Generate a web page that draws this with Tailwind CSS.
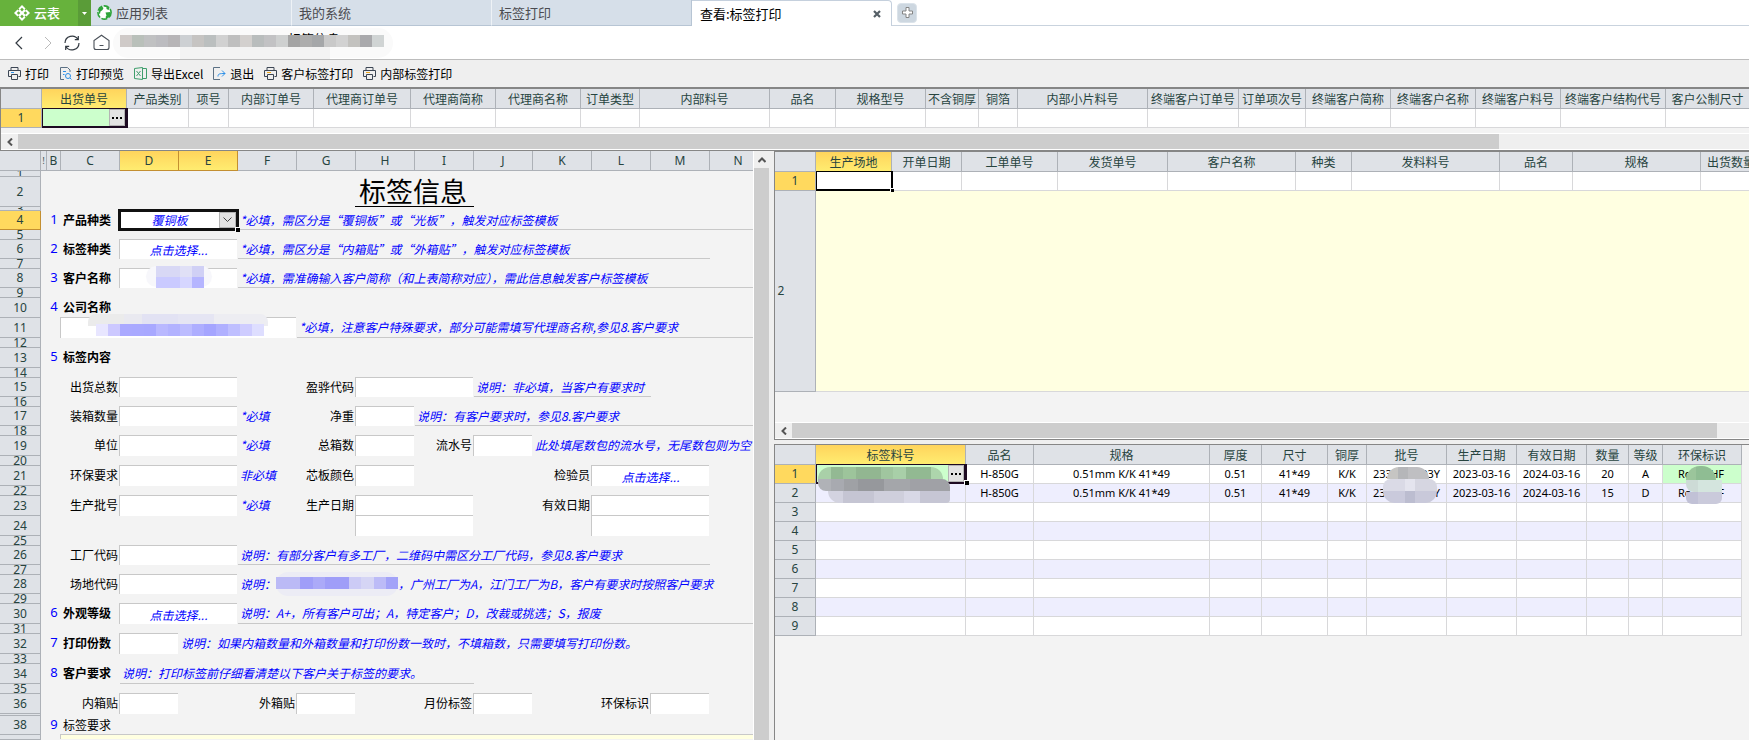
<!DOCTYPE html>
<html lang="zh-CN">
<head>
<meta charset="utf-8">
<title>查看:标签打印</title>
<script src="https://cdn.jsdelivr.net/npm/@tailwindcss/browser@4"></script>
</head>
<body class="flex h-screen flex-col overflow-hidden bg-[#efefef] font-['Noto_Sans_CJK_SC',sans-serif] text-xs leading-4 text-black">

<!-- Tab strip -->
<header class="flex h-[26px] shrink-0 bg-white text-[13px]">
  <div class="flex w-[78px] shrink-0 items-center gap-1 bg-[#67b23c] pl-[14px] text-white">
    <svg class="size-4" viewBox="0 0 16 16"><path d="M8 0l8 8-8 8-8-8z" fill="#fff"/><path d="M8 2.800l1.800 1.800L8 6.400 6.200 4.600zM8 9.600l1.800 1.800L8 13.200l-1.800-1.800zM4.600 6.200L6.400 8 4.600 9.800 2.800 8zM11.400 6.200L13.200 8l-1.800 1.800L9.600 8z" fill="#67b23c"/><path d="M3.500 3.500l1.500 1.500M12.500 3.500L11 5M3.500 12.500L5 11M12.500 12.500L11 11" stroke="#67b23c" stroke-width="1.200"/></svg>
    <span class="font-medium">云表</span>
  </div>
  <button aria-label="菜单" class="flex w-[13px] shrink-0 items-center justify-center bg-[#5a9c38]"><svg class="h-[3px] w-[5px]" viewBox="0 0 5 3"><path d="M0 0h5L2.500 3z" fill="#fff"/></svg></button>
  <nav class="flex">
    <a href="#" class="flex w-[201px] items-center gap-1 border-r border-b border-r-[#eef2f6] border-b-[#b7c5d4] bg-[#d6dfe9] pl-[6px] text-[#4b4b50]">
      <svg class="size-[15px]" viewBox="0 0 15 15"><circle cx="7.500" cy="7.500" r="6.600" fill="#fff" stroke="#2ea43a" stroke-width="1.600" stroke-dasharray="6 1.500"/><path d="M2 3.500L5 1.500l1.500 1.500-1 2-2 1.500L3 9l-1.500-1zM8.500 7.500l5-.500-.500 4-3.500 3-1-2 1-1.500zM9.500 1.500l3 2-1 1.500-2-1z" fill="#2ea43a"/></svg>
      应用列表</a>
    <a href="#" class="flex w-[200px] items-center border-r border-b border-r-[#eef2f6] border-b-[#b7c5d4] bg-[#d6dfe9] pl-[7px] text-[#4b4b50]">我的系统</a>
    <a href="#" class="flex w-[200px] items-center border-r border-b border-[#b7c5d4] bg-[#d6dfe9] pl-[7px] text-[#4b4b50]">标签打印</a>
    <a href="#" aria-current="page" class="flex w-[200px] items-center justify-between rounded-tr border-t border-r border-[#c5d0dd] bg-white pr-[10px] pl-2">查看:标签打印
      <svg class="size-2" viewBox="0 0 8 8"><path d="M1 1l6 6M7 1L1 7" stroke="#555f66" stroke-width="2.200"/></svg></a>
  </nav>
  <div class="flex flex-1 items-center border-b border-[#c9d3de] pl-[5px]">
    <button aria-label="新建标签页" class="flex size-5 items-center justify-center rounded-sm border border-[#dbe3ea] bg-[#cdd7e0]"><svg class="size-[11px]" viewBox="0 0 11 11"><path d="M4 .500h3V4h3.500v3H7v3.500H4V7H.500V4H4z" fill="#fff" stroke="#858585"/></svg></button>
  </div>
</header>

<!-- Address bar -->
<div class="flex h-[34px] shrink-0 items-center border-b border-[#bcbcbc] bg-white pl-[12px]">
  <button aria-label="后退" class="w-[32px]"><svg class="h-4 w-[14px]" viewBox="0 0 14 16" fill="none" stroke="#333a42" stroke-width="1.200"><path d="M10 2L4 8l6 6"/></svg></button>
  <button aria-label="前进" class="w-[20px]" disabled><svg class="h-4 w-2" viewBox="0 0 8 16" fill="none" stroke="#b9b9b9"><path d="M1 2l6 6-6 6"/></svg></button>
  <button aria-label="刷新" class="w-[29px]"><svg class="size-4" viewBox="0 0 16 16" fill="none" stroke="#333a42" stroke-width="1.200"><path d="M1 8A7 7 0 0 1 14 4.500M15 8A7 7 0 0 1 2 11.500M14.300 1v3.700h-3.500M1.700 15v-3.700h3.500"/></svg></button>
  <button aria-label="主页" class="w-[20px]"><svg class="size-[17px]" viewBox="0 0 17 17" fill="none" stroke="#4a5058" stroke-width="1.100"><path d="M3 15.500h11a2 2 0 0 0 2-2V6.500L8.500 1.200l-7.500 5.300v7a2 2 0 0 0 2 2zM6.500 11.500h4"/></svg></button>
  <div class="relative h-[30px] w-[280px] rounded-full bg-[#fafafa]">
    <span class="absolute top-[3px] left-[175px] text-[13px]">标签信息</span>
    <div class="absolute top-[19px] left-[67px] h-3 w-[150px] bg-[#f3f3f3]"></div>
    <div class="absolute top-[7px] left-[7px] flex h-3 w-[264px]">
      <i class="flex-1 bg-[#cfcac8]"></i><i class="flex-1 bg-[#b9c0ba]"></i><i class="flex-1 bg-[#c0c1c2]"></i><i class="flex-1 bg-[#bcbcc0]"></i><i class="flex-1 bg-[#b7b5b7]"></i><i class="flex-1 bg-[#cdd0d3]"></i><i class="flex-1 bg-[#c6c4c2]"></i><i class="flex-1 bg-[#bbbfbf]"></i><i class="flex-1 bg-[#d1d1d1]"></i><i class="flex-1 bg-[#bfbfbf]"></i><i class="flex-1 bg-[#d3d0ce]"></i><i class="flex-1 bg-[#b9bdbd]"></i><i class="flex-1 bg-[#c2c2c4]"></i><i class="flex-1 bg-[#ced0d0]"></i><i class="flex-1 bg-[#a4a4a4]"></i><i class="flex-1 bg-[#adadad]"></i><i class="flex-1 bg-[#a5a7a9]"></i><i class="flex-1 bg-[#c9c9c9]"></i><i class="flex-1 bg-[#d2d2d2]"></i><i class="flex-1 bg-[#c3c2bf]"></i><i class="flex-1 bg-[#a9a9ac]"></i><i class="flex-1 bg-[#d0d4d4]"></i>
    </div>
  </div>
</div>

<!-- Toolbar -->
<div class="flex h-[27px] shrink-0 items-center gap-[10px] pl-2">
  <button class="flex items-center gap-1"><svg class="size-[13px]" viewBox="0 0 13 13" fill="none" stroke="#3c4654"><path d="M3 3.500v-3h7v3M3 9.500H.500v-6h12v6h-2M3.500 7.500h6v5h-6z"/><path d="M3 5.500h3" stroke="#2b8fe8"/></svg>打印</button>
  <button class="flex items-center gap-1"><svg class="size-[13px]" viewBox="0 0 13 13" fill="none" stroke="#5b7084"><path d="M5 12.500H1.500V.500h7L11 3v2"/><path d="M4 4.500h3M4 7.500h1.500M11 11l1.500 1.500" stroke="#2b8fe8"/><circle cx="9" cy="9" r="2.500" stroke="#2b8fe8"/></svg>打印预览</button>
  <button class="flex items-center gap-1"><svg class="size-[13px]" viewBox="0 0 13 13" fill="none" stroke="#3f9e6c"><path d="M.500 1.500l8-1v12l-8-1zM8.500 1.500h4v10h-4M2.500 4l4 5M6.500 4l-4 5"/></svg>导出Excel</button>
  <button class="flex items-center gap-1"><svg class="size-[13px]" viewBox="0 0 13 13" fill="none" stroke="#5b7084"><path d="M7 .500H.500v12H7"/><path d="M5 9.500C5 7 6 6.500 12 6.500M9 3.500l3 3-3 3" stroke="#2b8fe8"/></svg>退出</button>
  <button class="flex items-center gap-1"><svg class="size-[13px]" viewBox="0 0 13 13" fill="none" stroke="#3c4654"><path d="M3 3.500v-3h7v3M3 9.500H.500v-6h12v6h-2M3.500 7.500h6v5h-6z"/><path d="M3 5.500h4" stroke="#f0a81c"/></svg>客户标签打印</button>
  <button class="flex items-center gap-1"><svg class="size-[13px]" viewBox="0 0 13 13" fill="none" stroke="#3c4654"><path d="M3 3.500v-3h7v3M3 9.500H.500v-6h12v6h-2M3.500 7.500h6v5h-6z"/><path d="M3 5.500h4" stroke="#f0a81c"/></svg>内部标签打印</button>
</div>

<!-- Shipment grid -->
<section class="shrink-0 overflow-hidden border-t-2 border-b border-l border-[#868686] bg-[#f3f3f3]">
  <table class="w-[1749px] table-fixed border-separate border-spacing-0 text-center [&_td]:border-r [&_td]:border-b [&_td]:border-[#d8d8da] [&_td]:bg-white [&_td]:p-0 [&_th]:overflow-hidden [&_th]:border-r [&_th]:border-b [&_th]:border-[#adb1b7] [&_th]:p-0 [&_th]:font-normal [&_th]:whitespace-nowrap [&_th]:text-[#27443f]">
    <colgroup><col class="w-[41px]"><col class="w-[85px]"><col class="w-[62px]"><col class="w-10"><col class="w-[85px]"><col class="w-[97px]"><col class="w-[85px]"><col class="w-[85px]"><col class="w-[59px]"><col class="w-[130px]"><col class="w-[66px]"><col class="w-[90px]"><col class="w-[53px]"><col class="w-[39px]"><col class="w-[130px]"><col class="w-[91px]"><col class="w-[67px]"><col class="w-[85px]"><col class="w-[85px]"><col class="w-[85px]"><col class="w-[105px]"><col class="w-[84px]"></colgroup>
    <thead><tr class="h-5 bg-[#dfe2e7]"><th></th><th class="bg-linear-to-b from-[#ffd45c] to-[#ffec70]">出货单号</th><th>产品类别</th><th>项号</th><th>内部订单号</th><th>代理商订单号</th><th>代理商简称</th><th>代理商名称</th><th>订单类型</th><th>内部料号</th><th>品名</th><th>规格型号</th><th>不含铜厚</th><th>铜箔</th><th>内部小片料号</th><th>终端客户订单号</th><th>订单项次号</th><th>终端客户简称</th><th>终端客户名称</th><th>终端客户料号</th><th>终端客户结构代号</th><th>客户公制尺寸</th></tr></thead>
    <tbody><tr class="h-[19px]"><th class="bg-[#ffd95e] font-['Noto_Sans',sans-serif]">1</th>
      <td class="relative"><div class="absolute -top-px left-0 z-10 flex h-5 w-[86px] justify-end border border-r-[3px] border-b-2 border-[#1d0a22] bg-[#ccffcc]"><button aria-label="选择出货单号" class="flex w-4 items-center justify-center gap-[2px] border border-[#b4b4b4] bg-[#e3e3e3]"><i class="size-[2px] bg-black"></i><i class="size-[2px] bg-black"></i><i class="size-[2px] bg-black"></i></button></div></td>
      <td></td><td></td><td></td><td></td><td></td><td></td><td></td><td></td><td></td><td></td><td></td><td></td><td></td><td></td><td></td><td></td><td></td><td></td><td></td><td></td></tr></tbody>
  </table>
  <div class="mt-[5px] flex h-[17px] border-y border-white bg-[#efefef]">
    <button aria-label="向左滚动" class="flex w-[17px] items-center justify-center"><svg class="h-2 w-[6px]" viewBox="0 0 6 8" fill="none" stroke="#555" stroke-width="2"><path d="M5 .500L1.500 4 5 7.500"/></svg></button>
    <div class="w-[84.7%] bg-[#cdcdcd]"></div>
  </div>
</section>

<main class="flex min-h-0 flex-1">
  <!-- Label form sheet -->
  <section class="flex w-[753px] shrink-0 flex-col overflow-hidden bg-[#f3f3f3]">
    <div class="grid h-5 shrink-0 grid-cols-[41px_6px_14px_repeat(11,59px)_1fr] overflow-hidden bg-[#dfe2e7] text-center font-['Noto_Sans',sans-serif] text-xs leading-[19px] text-[#27443f] *:overflow-hidden *:border-r *:border-b *:border-[#adb1b7]">
      <div></div><div class="text-[8px]">!</div><div>B</div><div>C</div><div class="border-[#c38f31]! bg-linear-to-b from-[#ffd45c] to-[#ffec70]">D</div><div class="border-[#c38f31]! bg-linear-to-b from-[#ffd45c] to-[#ffec70]">E</div><div>F</div><div>G</div><div>H</div><div>I</div><div>J</div><div>K</div><div>L</div><div>M</div><div class="border-r-0! pl-[13px]">N</div>
    </div>
    <div class="flex min-h-0 flex-1">
      <div class="grid w-[41px] shrink-0 grid-rows-[6px_30px_4px_19px_10px_19px_10px_19px_10px_20px_20px_10px_20px_10px_19px_10px_19px_10px_20px_10px_20px_10px_20px_20px_10px_19px_10px_19px_10px_20px_10px_20px_10px_20px_10px_20px_2px_19px_1fr] bg-[#dfe2e7] font-['Noto_Sans',sans-serif] leading-[10px] text-[#27443f] *:flex *:items-center *:justify-center *:overflow-hidden *:border-r *:border-b *:border-[#adb1b7]">
        <div>1</div><div>2</div><div>3</div><div class="border-[#c38f31]! bg-[#ffd95e]">4</div><div>5</div><div>6</div><div>7</div><div>8</div><div>9</div><div>10</div><div>11</div><div>12</div><div>13</div><div>14</div><div>15</div><div>16</div><div>17</div><div>18</div><div>19</div><div>20</div><div>21</div><div>22</div><div>23</div><div>24</div><div>25</div><div>26</div><div>27</div><div>28</div><div>29</div><div>30</div><div>31</div><div>32</div><div>33</div><div>34</div><div>35</div><div>36</div><div></div><div>38</div><div></div>
      </div>
      <form class="grid min-w-0 flex-1 grid-cols-[6px_14px_repeat(11,59px)_1fr] grid-rows-[6px_30px_4px_19px_10px_19px_10px_19px_10px_20px_20px_10px_20px_10px_19px_10px_19px_10px_20px_10px_20px_10px_20px_20px_10px_19px_10px_19px_10px_20px_10px_20px_10px_20px_10px_20px_2px_19px_1fr] leading-[17px] whitespace-nowrap [&_b]:col-start-2 [&_b]:text-center [&_b]:font-['Noto_Sans',sans-serif] [&_b]:text-[13px] [&_b]:font-normal [&_b]:text-[#0000ff] [&_button]:-mt-px [&_button]:-ml-px [&_button]:mr-px [&_button]:border-t [&_button]:border-l [&_button]:border-[#c8c8c8] [&_button]:bg-white [&_button]:text-center [&_button]:text-[#0000ff] [&_button]:italic [&_input]:-mt-px [&_input]:-ml-px [&_input]:mr-px [&_input]:min-w-0 [&_input]:border-t [&_input]:border-l [&_input]:border-[#c8c8c8] [&_input]:bg-white [&_label]:px-[2px] [&_label]:text-right [&_p]:min-w-0 [&_p]:border-[#c8c8c8] [&_p]:pl-[2px] [&_p]:text-[#0000ff] [&_p]:italic">
        <h1 class="col-span-2 col-start-8 row-start-2 -ml-px border-b border-black pr-[3px] text-center text-[27px] leading-[27px]">标签信息</h1>

        <b class="row-start-4">1</b><label for="kind" class="col-start-3 row-start-4 text-left! font-bold">产品种类</label>
        <div class="relative col-span-2 col-start-4 row-start-4">
          <div class="absolute -top-[2px] -right-px -bottom-px -left-[2px] z-10 border-[3px] border-[#111] bg-white">
            <select id="kind" class="block h-full w-full appearance-none pr-[18px] text-center text-xs leading-4 text-[#0000ff] italic"><option>覆铜板</option></select>
            <span class="pointer-events-none absolute top-0 right-0 bottom-0 flex w-[17px] items-center justify-center border border-[#b4b4b4] bg-[#e3e3e3]"><svg class="h-[6px] w-[9px]" viewBox="0 0 9 6" fill="none" stroke="#444"><path d="M.500 .500l4 4 4-4"/></svg></span>
            <i class="absolute -right-1 -bottom-1 size-[5px] border-t border-l border-white bg-black"></i>
          </div>
        </div>
        <p class="col-start-6 -col-end-1 row-start-4 border-b">*必填，需区分是“覆铜板”或“光板”，触发对应标签模板</p>

        <b class="row-start-6">2</b><label for="tag" class="col-start-3 row-start-6 text-left! font-bold">标签种类</label>
        <button type="button" id="tag" class="col-span-2 col-start-4 row-start-6">点击选择...</button>
        <p class="col-span-8 col-start-6 row-start-6 border-b">*必填，需区分是“内箱贴”或“外箱贴”，触发对应标签模板</p>

        <b class="row-start-8">3</b><label for="cust" class="col-start-3 row-start-8 text-left! font-bold">客户名称</label>
        <input id="cust" class="col-span-2 col-start-4 row-start-8">
        <div class="relative col-span-2 col-start-4 row-start-8">
          <div class="absolute -top-[3px] left-[26px] h-[21px] w-[66px] rounded-full bg-[#f7f7fb]"></div>
          <div class="absolute -top-[3px] left-9 grid h-[22px] w-12 grid-cols-4"><i class="bg-[#d8d8f5]"></i><i class="bg-[#d8d8f5]"></i><i class="bg-[#e0e0f6]"></i><i class="bg-[#d0d0f5]"></i><i class="bg-[#cacaff]"></i><i class="bg-[#cacaff]"></i><i class="bg-[#d6d6ff]"></i><i class="bg-[#b5b5ff]"></i></div>
        </div>
        <p class="col-start-6 -col-end-1 row-start-8 border-b">*必填，需准确输入客户简称（和上表简称对应），需此信息触发客户标签模板</p>

        <b class="row-start-10">4</b><label for="company" class="col-start-3 row-start-10 text-left! font-bold">公司名称</label>
        <input id="company" class="col-span-4 col-start-3 row-start-11">
        <div class="relative col-span-4 col-start-3 row-start-11">
          <div class="absolute -top-1 left-[27px] flex h-3 w-[180px] overflow-hidden rounded-t-lg"><i class="flex-2 bg-[#ebebeb]"></i><i class="flex-1 bg-[#e9e9f0]"></i><i class="flex-2 bg-[#e2e2f3]"></i><i class="flex-2 bg-[#e5e5f3]"></i><i class="flex-3 bg-[#ededf2]"></i></div>
          <div class="absolute top-[6px] left-[35px] flex h-3 w-[168px]"><i class="flex-1 bg-[#e8e6ff]"></i><i class="flex-1 bg-[#ccc8ff]"></i><i class="flex-1 bg-[#aaa9ff]"></i><i class="flex-1 bg-[#a9a9ff]"></i><i class="flex-1 bg-[#a8a8ff]"></i><i class="flex-1 bg-[#b9b8ff]"></i><i class="flex-1 bg-[#b2b2ff]"></i><i class="flex-1 bg-[#bcbcff]"></i><i class="flex-1 bg-[#aeaeff]"></i><i class="flex-1 bg-[#a5a5ff]"></i><i class="flex-1 bg-[#b0b0ff]"></i><i class="flex-1 bg-[#bfbfff]"></i><i class="flex-1 bg-[#ceccff]"></i><i class="flex-1 bg-[#dedeff]"></i></div>
        </div>
        <p class="col-start-7 -col-end-1 row-start-11 border-b">*必填，注意客户特殊要求，部分可能需填写代理商名称,参见8.客户要求</p>

        <b class="row-start-13">5</b><span class="col-start-3 row-start-13 pl-[2px] font-bold">标签内容</span>

        <label for="total" class="col-start-3 row-start-15">出货总数</label><input id="total" class="col-span-2 col-start-4 row-start-15">
        <label for="code" class="col-start-7 row-start-15">盈骅代码</label><input id="code" class="col-span-2 col-start-8 row-start-15">
        <p class="col-span-3 col-start-10 row-start-15 border-b">说明：非必填，当客户有要求时</p>

        <label for="qty" class="col-start-3 row-start-17">装箱数量</label><input id="qty" class="col-span-2 col-start-4 row-start-17">
        <p class="col-start-6 row-start-17">*必填</p>
        <label for="net" class="col-start-7 row-start-17">净重</label><input id="net" class="col-start-8 row-start-17">
        <p class="col-start-9 -col-end-1 row-start-17 border-b">说明：有客户要求时，参见8.客户要求</p>

        <label for="unit" class="col-start-3 row-start-19">单位</label><input id="unit" class="col-span-2 col-start-4 row-start-19">
        <p class="col-start-6 row-start-19">*必填</p>
        <label for="boxes" class="col-start-7 row-start-19">总箱数</label><input id="boxes" class="col-start-8 row-start-19">
        <label for="serial" class="col-start-9 row-start-19">流水号</label><input id="serial" class="col-start-10 row-start-19">
        <p class="col-start-11 -col-end-1 row-start-19">此处填尾数包的流水号，无尾数包则为空</p>

        <label for="env" class="col-start-3 row-start-21">环保要求</label><input id="env" class="col-span-2 col-start-4 row-start-21">
        <p class="col-start-6 row-start-21">非必填</p>
        <label for="core" class="col-start-7 row-start-21">芯板颜色</label><input id="core" class="col-start-8 row-start-21">
        <label for="inspector" class="col-start-11 row-start-21">检验员</label><button type="button" id="inspector" class="col-span-2 col-start-12 row-start-21">点击选择...</button>

        <label for="batch" class="col-start-3 row-start-23">生产批号</label><input id="batch" class="col-span-2 col-start-4 row-start-23">
        <p class="col-start-6 row-start-23">*必填</p>
        <label for="made" class="col-start-7 row-start-23">生产日期</label><input id="made" class="col-span-2 col-start-8 row-start-23"><input aria-label="生产日期 2" class="col-span-2 col-start-8 row-start-24">
        <label for="expiry" class="col-start-11 row-start-23">有效日期</label><input id="expiry" class="col-span-2 col-start-12 row-start-23"><input aria-label="有效日期 2" class="col-span-2 col-start-12 row-start-24">

        <label for="factory" class="col-start-3 row-start-26">工厂代码</label><input id="factory" class="col-span-2 col-start-4 row-start-26">
        <p class="col-span-8 col-start-6 row-start-26 border-b">说明：有部分客户有多工厂，二维码中需区分工厂代码，参见8.客户要求</p>

        <label for="site" class="col-start-3 row-start-28">场地代码</label><input id="site" class="col-span-2 col-start-4 row-start-28">
        <p class="col-start-6 -col-end-1 row-start-28 flex">说明：<span class="relative -mt-[3px] h-6 w-[122px] rounded-full bg-[#ececf5]"><span class="absolute top-[5px] flex h-3 w-full"><i class="flex-2 bg-[#bbbaf6]"></i><i class="flex-1 bg-[#9f9ef8]"></i><i class="flex-1 bg-[#abaaf8]"></i><i class="flex-2 bg-[#9f9ef8]"></i><i class="flex-1 bg-[#cccbf6]"></i><i class="flex-1 bg-[#d5d5f5]"></i><i class="flex-1 bg-[#bcbbf7]"></i><i class="flex-1 bg-[#a3a3f8]"></i></span></span>，广州工厂为A，江门工厂为B，客户有要求时按照客户要求</p>

        <b class="row-start-30">6</b><label for="grade" class="col-start-3 row-start-30 text-left! font-bold">外观等级</label><button type="button" id="grade" class="col-span-2 col-start-4 row-start-30">点击选择...</button>
        <p class="col-start-6 -col-end-1 row-start-30 border-b">说明：A+，所有客户可出；A，特定客户；D，改裁或挑选；S，报废</p>

        <b class="row-start-32">7</b><label for="copies" class="col-start-3 row-start-32 text-left! font-bold">打印份数</label><input id="copies" class="col-start-4 row-start-32">
        <p class="col-start-5 -col-end-1 row-start-32">说明：如果内箱数量和外箱数量和打印份数一致时，不填箱数，只需要填写打印份数。</p>

        <b class="row-start-34">8</b><span class="col-start-3 row-start-34 pl-[2px] font-bold">客户要求</span>
        <p class="col-span-6 col-start-4 row-start-34 border-b">说明：打印标签前仔细看清楚以下客户关于标签的要求。</p>

        <label for="inner" class="col-start-3 row-start-36">内箱贴</label><input id="inner" class="col-start-4 row-start-36">
        <label for="outer" class="col-start-6 row-start-36">外箱贴</label><input id="outer" class="col-start-7 row-start-36">
        <label for="month" class="col-start-9 row-start-36">月份标签</label><input id="month" class="col-start-10 row-start-36">
        <label for="mark" class="col-start-12 row-start-36">环保标识</label><input id="mark" class="col-start-13 row-start-36">

        <b class="row-start-38">9</b><label for="req" class="col-start-3 row-start-38 text-left!">标签要求</label>
        <textarea id="req" class="col-start-3 -col-end-1 row-start-39 -mt-px -ml-px h-full min-h-0 resize-none border-t border-l border-[#c8c8c8] bg-[#ffffe1]"></textarea>
      </form>
    </div>
  </section>

  <!-- Form scrollbar -->
  <div class="flex w-[21px] shrink-0 flex-col border-l border-white bg-[#efefef]">
    <button aria-label="向上滚动" class="flex h-[17px] w-[15px] items-center justify-center"><svg class="h-[6px] w-2" viewBox="0 0 8 6" fill="none" stroke="#555" stroke-width="2"><path d="M.500 5L4 1.500 7.500 5"/></svg></button>
    <div class="w-[15px] flex-1 bg-[#cdcdcd]"></div>
  </div>

  <div class="flex min-w-0 flex-1 flex-col gap-1">
    <!-- Work order grid -->
    <section class="shrink-0 overflow-hidden border-t border-b border-l border-[#868686] bg-[#f3f3f3]">
      <table class="w-[987px] table-fixed border-separate border-spacing-0 text-center [&_td]:border-r [&_td]:border-b [&_td]:border-[#d8d8da] [&_td]:bg-white [&_td]:p-0 [&_th]:overflow-hidden [&_th]:border-r [&_th]:border-b [&_th]:border-[#adb1b7] [&_th]:p-0 [&_th]:font-normal [&_th]:whitespace-nowrap [&_th]:text-[#27443f]">
        <colgroup><col class="w-[41px]"><col class="w-[76px]"><col class="w-[70px]"><col class="w-24"><col class="w-[110px]"><col class="w-32"><col class="w-14"><col class="w-[148px]"><col class="w-[73px]"><col class="w-32"><col class="w-[61px]"></colgroup>
        <thead><tr class="h-5 bg-[#dfe2e7]"><th></th><th class="bg-linear-to-b from-[#ffd45c] to-[#ffec70]">生产场地</th><th>开单日期</th><th>工单单号</th><th>发货单号</th><th>客户名称</th><th>种类</th><th>发料料号</th><th>品名</th><th>规格</th><th>出货数量</th></tr></thead>
        <tbody>
          <tr class="h-[19px]"><th class="bg-[#ffd95e] font-['Noto_Sans',sans-serif]">1</th><td class="relative"><div class="absolute -top-px left-0 z-10 h-5 w-[77px] border-2 border-t border-l border-black bg-white"><i class="absolute -right-[3px] -bottom-[3px] size-1 border-t border-l border-white bg-black"></i></div></td><td></td><td></td><td></td><td></td><td></td><td></td><td></td><td></td><td></td></tr>
          <tr class="h-[201px]"><th class="bg-[#dfe2e7] pr-[28px]! font-['Noto_Sans',sans-serif]">2</th><td colspan="10" class="bg-[#ffffe1]!"></td></tr>
        </tbody>
      </table>
      <div class="mt-[30px] flex h-[17px] border-y border-white bg-[#efefef]">
        <button aria-label="向左滚动" class="flex w-[17px] items-center justify-center"><svg class="h-2 w-[6px]" viewBox="0 0 6 8" fill="none" stroke="#555" stroke-width="2"><path d="M5 .500L1.500 4 5 7.500"/></svg></button>
        <div class="w-[95%] bg-[#cdcdcd]"></div>
      </div>
    </section>

    <!-- Label item grid -->
    <section class="min-h-0 flex-1 overflow-hidden border-t border-l border-[#868686] bg-[#f3f3f3]">
      <table class="w-[967px] table-fixed border-separate border-spacing-0 text-center [&_tbody_tr]:h-[19px] [&_tbody_tr]:bg-white [&_tbody_tr:nth-child(even)]:bg-[#eeeefe] [&_td]:border-r [&_td]:border-b [&_td]:border-[#d8d8da] [&_td]:p-0 [&_td]:font-['Noto_Sans',sans-serif] [&_td]:text-[11px] [&_td]:whitespace-nowrap [&_th]:overflow-hidden [&_th]:border-r [&_th]:border-b [&_th]:border-[#adb1b7] [&_th]:bg-[#dfe2e7] [&_th]:p-0 [&_th]:font-normal [&_th]:whitespace-nowrap [&_th]:text-[#27443f] [&_tbody_th]:font-['Noto_Sans',sans-serif]">
        <colgroup><col class="w-[41px]"><col class="w-[150px]"><col class="w-[68px]"><col class="w-44"><col class="w-[52px]"><col class="w-[66px]"><col class="w-[39px]"><col class="w-20"><col class="w-[70px]"><col class="w-[70px]"><col class="w-[42px]"><col class="w-[34px]"><col class="w-[79px]"></colgroup>
        <thead><tr class="h-5"><th></th><th class="bg-linear-to-b from-[#ffd45c] to-[#ffec70]">标签料号</th><th>品名</th><th>规格</th><th>厚度</th><th>尺寸</th><th>铜厚</th><th>批号</th><th>生产日期</th><th>有效日期</th><th>数量</th><th>等级</th><th>环保标识</th></tr></thead>
        <tbody>
          <tr><th class="bg-[#ffd95e]!">1</th>
            <td class="relative"><div class="absolute -top-px left-0 z-10 flex h-5 w-[151px] justify-end border border-r-[3px] border-b-2 border-[#1d0a22] bg-[#ccffcc]"><button aria-label="选择标签料号" class="flex w-4 items-center justify-center gap-[2px] border border-[#b4b4b4] bg-[#e3e3e3]"><i class="size-[2px] bg-black"></i><i class="size-[2px] bg-black"></i><i class="size-[2px] bg-black"></i></button><i class="absolute -right-[5px] -bottom-[3px] size-[5px] border-t border-l border-white bg-black"></i></div>
              <div class="absolute top-[2px] left-[2px] z-20 flex w-[132px] flex-col">
                <div class="flex h-3 w-[125px] overflow-hidden rounded-t-xl"><i class="flex-1 bg-[#a9d0a8]"></i><i class="flex-1 bg-[#93b993]"></i><i class="flex-1 bg-[#9dc49b]"></i><i class="flex-2 bg-[#92b691]"></i><i class="flex-1 bg-[#a0c69f]"></i><i class="flex-1 bg-[#a8cfa8]"></i><i class="flex-2 bg-[#92b992]"></i><i class="flex-1 bg-[#add5ac]"></i></div>
                <div class="flex h-3 overflow-hidden rounded-tr-lg rounded-bl-lg"><i class="flex-1 bg-[#b0b2b7]"></i><i class="flex-1 bg-[#a8aab0]"></i><i class="flex-1 bg-[#9fa1a5]"></i><i class="flex-2 bg-[#96989c]"></i><i class="flex-2 bg-[#a4a6aa]"></i><i class="flex-3 bg-[#a0a1a6]"></i></div>
                <div class="ml-[10px] flex h-3 overflow-hidden rounded-br-sm rounded-bl-xl"><i class="flex-1 bg-[#d3d3e0]"></i><i class="flex-2 bg-[#c5c5d3]"></i><i class="flex-2 bg-[#cfcfdc]"></i><i class="flex-1 bg-[#d8d8e6]"></i><i class="flex-2 bg-[#c6c6d4]"></i></div>
              </div></td>
            <td>H-850G</td><td>0.51mm K/K 41*49</td><td>0.51</td><td>41*49</td><td>K/K</td>
            <td class="relative"><span class="flex justify-between px-[6px]"><span>233</span><span>03Y</span></span>
              <div class="absolute top-[2px] left-4 z-10 w-[54px]">
                <div class="ml-1 flex h-3 w-[42px] overflow-hidden rounded-t-2xl"><i class="flex-1 bg-[#c6c5c3]"></i><i class="flex-1 bg-[#b5b6b9]"></i><i class="flex-2 bg-[#bfbfc2]"></i></div>
                <div class="flex h-3 overflow-hidden rounded-t-lg"><i class="flex-2 bg-[#dadae6]"></i><i class="flex-1 bg-[#e4e4ee]"></i><i class="flex-2 bg-[#d6d6e1]"></i></div>
                <div class="flex h-3 overflow-hidden rounded-b-2xl"><i class="flex-2 bg-[#cacadc]"></i><i class="flex-1 bg-[#bcbdd0]"></i><i class="flex-2 bg-[#c9c9da]"></i></div>
              </div></td>
            <td>2023-03-16</td><td>2024-03-16</td><td>20</td><td>A</td>
            <td class="relative bg-[#ccffcc]"><span class="flex justify-between pr-[17px] pl-[15px]"><span>Ro</span><span>HF</span></span>
              <div class="absolute top-px left-[23px] z-10 w-9">
                <div class="flex h-[14px] w-[30px] overflow-hidden rounded-t-full"><i class="flex-1 bg-[#9bc59b]"></i><i class="flex-2 bg-[#8fbd93]"></i></div>
                <div class="flex h-3 overflow-hidden rounded-bl-lg"><i class="flex-1 bg-[#cddbd6]"></i><i class="flex-2 bg-[#d4e5de]"></i></div>
                <div class="flex h-3 overflow-hidden rounded-b-md"><i class="flex-1 bg-[#c1c1d6]"></i><i class="flex-2 bg-[#cacadb]"></i></div>
              </div></td></tr>
          <tr><th>2</th><td></td><td>H-850G</td><td>0.51mm K/K 41*49</td><td>0.51</td><td>41*49</td><td>K/K</td><td><span class="flex justify-between px-[6px]"><span>233</span><span>Y</span></span></td><td>2023-03-16</td><td>2024-03-16</td><td>15</td><td>D</td><td><span class="flex justify-between pr-[17px] pl-[15px]"><span>Ro</span><span>F</span></span></td></tr>
          <tr><th>3</th><td></td><td></td><td></td><td></td><td></td><td></td><td></td><td></td><td></td><td></td><td></td><td></td></tr>
          <tr><th>4</th><td></td><td></td><td></td><td></td><td></td><td></td><td></td><td></td><td></td><td></td><td></td><td></td></tr>
          <tr><th>5</th><td></td><td></td><td></td><td></td><td></td><td></td><td></td><td></td><td></td><td></td><td></td><td></td></tr>
          <tr><th>6</th><td></td><td></td><td></td><td></td><td></td><td></td><td></td><td></td><td></td><td></td><td></td><td></td></tr>
          <tr><th>7</th><td></td><td></td><td></td><td></td><td></td><td></td><td></td><td></td><td></td><td></td><td></td><td></td></tr>
          <tr><th>8</th><td></td><td></td><td></td><td></td><td></td><td></td><td></td><td></td><td></td><td></td><td></td><td></td></tr>
          <tr><th>9</th><td></td><td></td><td></td><td></td><td></td><td></td><td></td><td></td><td></td><td></td><td></td><td></td></tr>
        </tbody>
      </table>
    </section>
  </div>
</main>
</body>
</html>
